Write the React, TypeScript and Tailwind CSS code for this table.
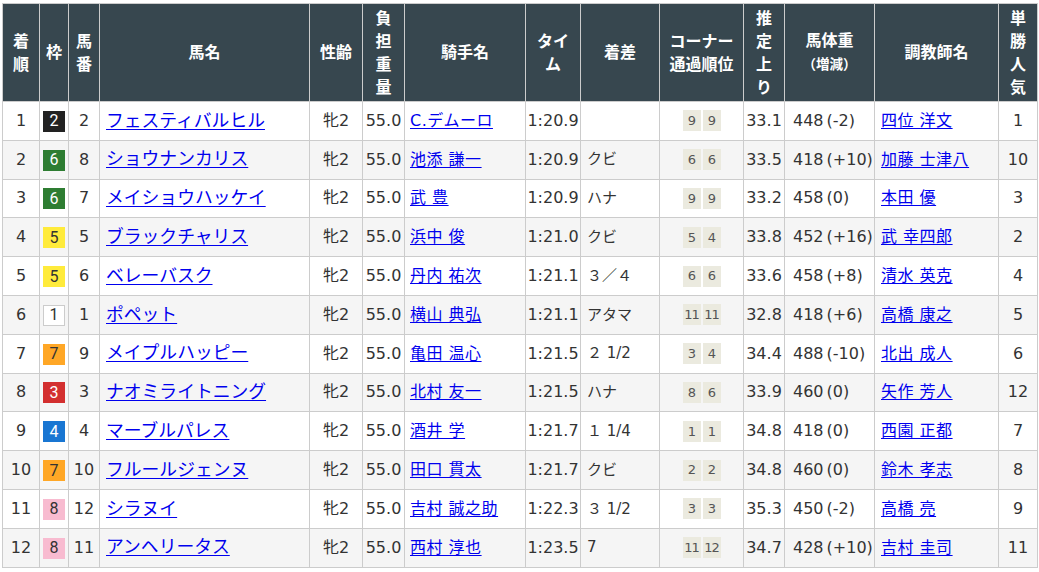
type Row = {
  rank: number;
  waku: number;
  num: number;
  horse: string;
  sex: string;
  kg: string;
  jockey: string;
  time: string;
  margin: string;
  corners: [string, string];
  last: string;
  weight: string;
  diff: string;
  trainer: string;
  pop: number;
};

const rows: Row[] = [
  { rank: 1, waku: 2, num: 2, horse: 'フェスティバルヒル', sex: '牝2', kg: '55.0', jockey: 'C.デムーロ', time: '1:20.9', margin: '', corners: ['9', '9'], last: '33.1', weight: '448', diff: '(-2)', trainer: '四位 洋文', pop: 1 },
  { rank: 2, waku: 6, num: 8, horse: 'ショウナンカリス', sex: '牝2', kg: '55.0', jockey: '池添 謙一', time: '1:20.9', margin: 'クビ', corners: ['6', '6'], last: '33.5', weight: '418', diff: '(+10)', trainer: '加藤 士津八', pop: 10 },
  { rank: 3, waku: 6, num: 7, horse: 'メイショウハッケイ', sex: '牝2', kg: '55.0', jockey: '武 豊', time: '1:20.9', margin: 'ハナ', corners: ['9', '9'], last: '33.2', weight: '458', diff: '(0)', trainer: '本田 優', pop: 3 },
  { rank: 4, waku: 5, num: 5, horse: 'ブラックチャリス', sex: '牝2', kg: '55.0', jockey: '浜中 俊', time: '1:21.0', margin: 'クビ', corners: ['5', '4'], last: '33.8', weight: '452', diff: '(+16)', trainer: '武 幸四郎', pop: 2 },
  { rank: 5, waku: 5, num: 6, horse: 'ベレーバスク', sex: '牝2', kg: '55.0', jockey: '丹内 祐次', time: '1:21.1', margin: '３／４', corners: ['6', '6'], last: '33.6', weight: '458', diff: '(+8)', trainer: '清水 英克', pop: 4 },
  { rank: 6, waku: 1, num: 1, horse: 'ポペット', sex: '牝2', kg: '55.0', jockey: '横山 典弘', time: '1:21.1', margin: 'アタマ', corners: ['11', '11'], last: '32.8', weight: '418', diff: '(+6)', trainer: '高橋 康之', pop: 5 },
  { rank: 7, waku: 7, num: 9, horse: 'メイプルハッピー', sex: '牝2', kg: '55.0', jockey: '亀田 温心', time: '1:21.5', margin: '２ 1/2', corners: ['3', '4'], last: '34.4', weight: '488', diff: '(-10)', trainer: '北出 成人', pop: 6 },
  { rank: 8, waku: 3, num: 3, horse: 'ナオミライトニング', sex: '牝2', kg: '55.0', jockey: '北村 友一', time: '1:21.5', margin: 'ハナ', corners: ['8', '6'], last: '33.9', weight: '460', diff: '(0)', trainer: '矢作 芳人', pop: 12 },
  { rank: 9, waku: 4, num: 4, horse: 'マーブルパレス', sex: '牝2', kg: '55.0', jockey: '酒井 学', time: '1:21.7', margin: '１ 1/4', corners: ['1', '1'], last: '34.8', weight: '418', diff: '(0)', trainer: '西園 正都', pop: 7 },
  { rank: 10, waku: 7, num: 10, horse: 'フルールジェンヌ', sex: '牝2', kg: '55.0', jockey: '田口 貫太', time: '1:21.7', margin: 'クビ', corners: ['2', '2'], last: '34.8', weight: '460', diff: '(0)', trainer: '鈴木 孝志', pop: 8 },
  { rank: 11, waku: 8, num: 12, horse: 'シラヌイ', sex: '牝2', kg: '55.0', jockey: '吉村 誠之助', time: '1:22.3', margin: '３ 1/2', corners: ['3', '3'], last: '35.3', weight: '450', diff: '(-2)', trainer: '高橋 亮', pop: 9 },
  { rank: 12, waku: 8, num: 11, horse: 'アンヘリータス', sex: '牝2', kg: '55.0', jockey: '西村 淳也', time: '1:23.5', margin: '7', corners: ['11', '12'], last: '34.7', weight: '428', diff: '(+10)', trainer: '吉村 圭司', pop: 11 },
];

const wakuStyle: Record<number, string> = {
  1: 'bg-white text-[#333] border border-[#ccc]',
  2: 'bg-[#222] text-white',
  3: 'bg-[#d32f2f] text-white',
  4: 'bg-[#1976d2] text-white',
  5: 'bg-[#ffeb3b] text-[#333]',
  6: 'bg-[#2e7d32] text-white',
  7: 'bg-[#ffa726] text-[#333]',
  8: 'bg-[#f8bbd0] text-[#333]',
};

const th = 'border border-[#ccc] bg-[#37474f] text-white font-bold text-[16px] leading-[23px] text-center align-middle p-0';
const td = 'border border-[#ccc] h-[38.8px] p-0 align-middle';
const link = 'text-[#0000ee] underline underline-offset-2';

export default function App() {
  return (
    <div className="bg-white w-[1039px] h-[572px] pt-[3px] pl-[2px] font-['DejaVu_Sans','Noto_Sans_CJK_JP',sans-serif] text-[16px] text-[#333]">
      <table className="border-collapse table-fixed w-[1035px]">
        <colgroup>
          <col className="w-[37px]" />
          <col className="w-[29px]" />
          <col className="w-[31px]" />
          <col className="w-[210px]" />
          <col className="w-[53px]" />
          <col className="w-[42px]" />
          <col className="w-[121px]" />
          <col className="w-[55px]" />
          <col className="w-[79px]" />
          <col className="w-[84px]" />
          <col className="w-[41px]" />
          <col className="w-[90px]" />
          <col className="w-[124px]" />
          <col className="w-[39px]" />
        </colgroup>
        <thead>
          <tr className="h-[98px]">
            <th className={th}>着<br />順</th>
            <th className={th}>枠</th>
            <th className={th}>馬<br />番</th>
            <th className={th}>馬名</th>
            <th className={th}>性齢</th>
            <th className={th}>負<br />担<br />重<br />量</th>
            <th className={th}>騎手名</th>
            <th className={th}>タイ<br />ム</th>
            <th className={th}>着差</th>
            <th className={th}>コーナー<br />通過順位</th>
            <th className={th}>推<br />定<br />上<br />り</th>
            <th className={th}>
              馬体重
              <br />
              <span className="text-[13.5px]">（増減）</span>
            </th>
            <th className={th}>調教師名</th>
            <th className={th}>単<br />勝<br />人<br />気</th>
          </tr>
        </thead>
        <tbody>
          {rows.map((r, i) => (
            <tr key={r.rank} className={i % 2 === 1 ? 'bg-[#f5f5f5]' : 'bg-white'}>
              <td className={`${td} text-center`}>{r.rank}</td>
              <td className={`${td} text-center`}>
                <span
                  className={`inline-flex h-[21px] min-h-[21px] w-[22px] min-w-[22px] shrink-0 items-center justify-center align-middle font-['Roboto',sans-serif] text-[16px] ${wakuStyle[r.waku]}`}
                >
                  {r.waku}
                </span>
              </td>
              <td className={`${td} text-center`}>{r.num}</td>
              <td className={`${td} pl-[6px]`}>
                <a className={`${link} text-[17.8px]`} href="#">{r.horse}</a>
              </td>
              <td className={`${td} text-center`}>{r.sex}</td>
              <td className={`${td} text-center`}>{r.kg}</td>
              <td className={`${td} pl-[5px]`}>
                <a className={`${link} tracking-[0.5px]`} href="#">{r.jockey}</a>
              </td>
              <td className={`${td} text-center`}>{r.time}</td>
              <td className={`${td} pl-[6px] text-[15px]`}>{r.margin}</td>
              <td className={td}>
                <div className="flex justify-center gap-[2px]">
                  {r.corners.map((c, k) => (
                    <span
                      key={k}
                      className="flex h-[21px] w-[18px] items-center justify-center bg-[#ebeadf] text-[13px] tracking-[-1px] text-[#555]"
                    >
                      {c}
                    </span>
                  ))}
                </div>
              </td>
              <td className={`${td} text-center`}>{r.last}</td>
              <td className={`${td} pl-[8px] whitespace-nowrap`}>
                {r.weight}
                <span className="ml-[3px]">{r.diff}</span>
              </td>
              <td className={`${td} pl-[6px]`}>
                <a className={`${link} tracking-[0.5px]`} href="#">{r.trainer}</a>
              </td>
              <td className={`${td} text-center`}>{r.pop}</td>
            </tr>
          ))}
        </tbody>
      </table>
    </div>
  );
}
